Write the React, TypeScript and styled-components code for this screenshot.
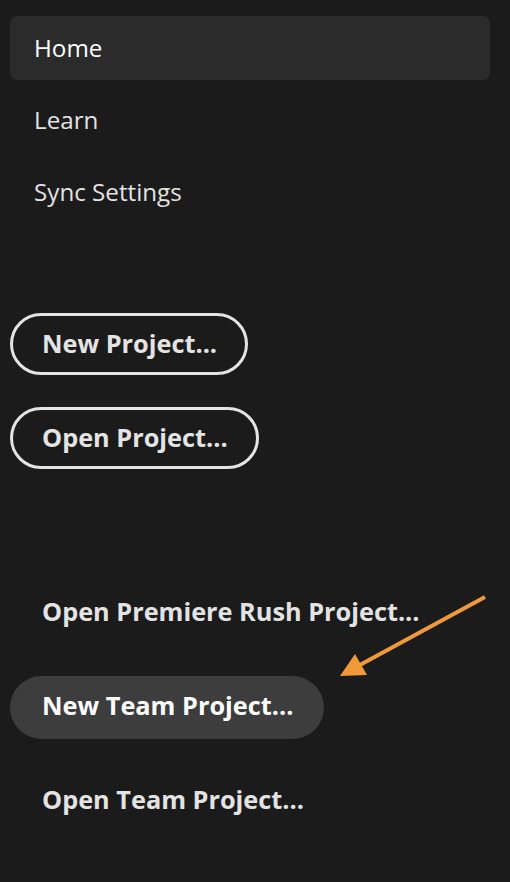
import React from "react";
import styled, { createGlobalStyle } from "styled-components";

const Global = createGlobalStyle`
  html, body { margin: 0; padding: 0; background: #1b1b1b; }
  body { font-family: "Open Sans", "Noto Sans", sans-serif; -webkit-font-smoothing: antialiased; }
`;

const Page = styled.div`
  position: relative;
  width: 510px;
  height: 882px;
  background: #1b1b1b;
  padding: 16px 20px 0 10px;
  box-sizing: border-box;
  overflow: hidden;
`;

const Nav = styled.nav`
  display: flex;
  flex-direction: column;
  gap: 8px;
`;

const NavItem = styled.div<{ $active?: boolean }>`
  height: 64px;
  box-sizing: border-box;
  padding: 0 0 2px 24px;
  display: flex;
  align-items: center;
  border-radius: 7px;
  background: ${(p) => (p.$active ? "#2b2b2b" : "transparent")};
  color: ${(p) => (p.$active ? "#ffffff" : "#e3e3e3")};
  font-size: 24.2px;
  font-weight: 400;
`;

const Actions = styled.div`
  margin-top: 89px;
  display: flex;
  flex-direction: column;
  align-items: flex-start;
  gap: 32px;
`;

const OutlineButton = styled.div`
  height: 62px;
  box-sizing: border-box;
  border: 3px solid #e4e4e4;
  border-radius: 31px;
  padding: 0 28px 2px 29px;
  display: flex;
  align-items: center;
  color: #e4e4e4;
  font-size: 25.3px;
  font-weight: 700;
`;

const TeamList = styled.div`
  margin-top: 113px;
  display: flex;
  flex-direction: column;
  align-items: flex-start;
  gap: 31px;
`;

const TeamItem = styled.div<{ $active?: boolean }>`
  height: 63px;
  box-sizing: border-box;
  display: flex;
  align-items: center;
  padding: 0 31px 5px 32px;
  border-radius: 32px;
  background: ${(p) => (p.$active ? "#3d3d3d" : "transparent")};
  color: ${(p) => (p.$active ? "#ffffff" : "#e3e3e3")};
  font-size: 25.3px;
  font-weight: 700;
`;

const ArrowSvg = styled.svg`
  position: absolute;
  left: 0;
  top: 0;
  pointer-events: none;
`;

export default function App() {
  return (
    <>
      <Global />
      <Page>
        <Nav>
          <NavItem $active>Home</NavItem>
          <NavItem>Learn</NavItem>
          <NavItem>Sync Settings</NavItem>
        </Nav>
        <Actions>
          <OutlineButton>New Project...</OutlineButton>
          <OutlineButton>Open Project...</OutlineButton>
        </Actions>
        <TeamList>
          <TeamItem>Open Premiere Rush Project...</TeamItem>
          <TeamItem $active>New Team Project...</TeamItem>
          <TeamItem>Open Team Project...</TeamItem>
        </TeamList>
        <ArrowSvg width="510" height="882" viewBox="0 0 510 882">
          <line x1="485" y1="597" x2="358" y2="666" stroke="#f0993a" strokeWidth="4" />
          <polygon points="340,676 355,654 367,675" fill="#f0993a" />
        </ArrowSvg>
      </Page>
    </>
  );
}
